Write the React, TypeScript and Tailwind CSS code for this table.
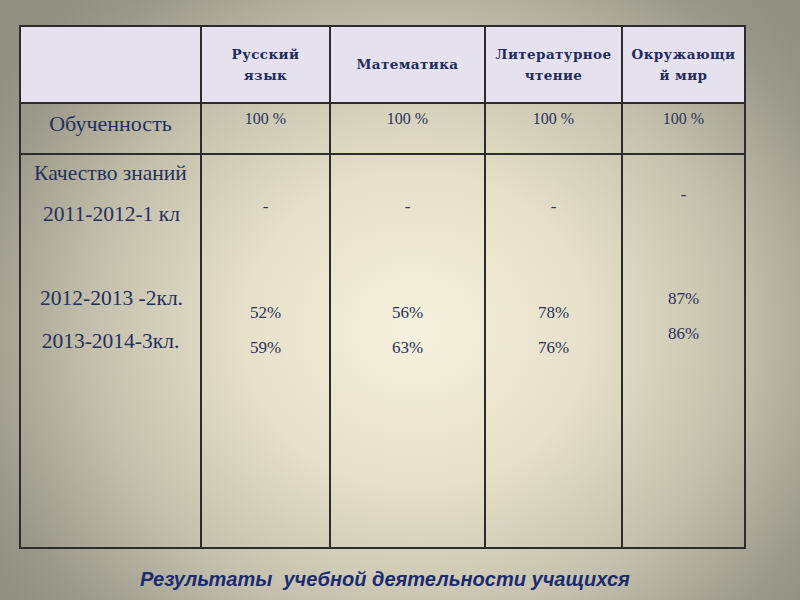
const serif = "font-['Liberation_Serif',serif]";

const subjects = [
  ["Русский", "язык"],
  ["Математика"],
  ["Литературное", "чтение"],
  ["Окружающи", "й мир"],
];

const results = [
  { dash: "pt-[42px]", vals: ["52%", "59%"], gap: "mt-[86px]" },
  { dash: "pt-[42px]", vals: ["56%", "63%"], gap: "mt-[86px]" },
  { dash: "pt-[42px]", vals: ["78%", "76%"], gap: "mt-[86px]" },
  { dash: "pt-[30px]", vals: ["87%", "86%"], gap: "mt-[84px]" },
];

const App = () => {
  return (
    <div className="w-[800px] h-[600px] overflow-hidden bg-[radial-gradient(ellipse_62%_75%_at_52%_55%,#f6f1de_0%,#e6e0ca_35%,#c4c0ad_65%,#9b998a_90%,#929081_100%)]">
      <div className="pt-[25px] pl-[19px]">
        <div className="grid grid-cols-[181px_129px_155px_137px_121px] grid-rows-[77px_51px_392px] w-max border-2 border-[#2c2c2c]">
          <div className="bg-[#e5e1ee] border-r-2 border-b-2 border-[#2c2c2c]" />
          {subjects.map((s, i) => (
            <div
              key={i}
              className={
                "bg-[#e5e1ee] border-b-2 border-[#2c2c2c] flex flex-col items-center justify-center font-['DejaVu_Serif',serif] font-bold text-[13.5px] leading-[21px] text-[#1f2b5c] tracking-[0.4px] " +
                (i < 3 ? "border-r-2" : "")
              }
            >
              {s.map((l) => (
                <div key={l}>{l}</div>
              ))}
            </div>
          ))}

          <div className={`border-r-2 border-b-2 border-[#2c2c2c] text-center pt-[7px] text-[22px] leading-[26px] text-[#25305d] ${serif}`}>
            Обученность
          </div>
          {[0, 1, 2, 3].map((i) => (
            <div
              key={i}
              className={
                `border-b-2 border-[#2c2c2c] text-center pt-[5px] text-[16px] leading-5 text-[#2b3358] ${serif} ` +
                (i < 3 ? "border-r-2" : "")
              }
            >
              100 %
            </div>
          ))}

          <div className={`border-r-2 border-[#2c2c2c] text-center pt-[5px] text-[21.5px] leading-[26px] text-[#25305d] ${serif}`}>
            <div>Качество знаний</div>
            <div className="mt-[15px] pl-[2px]">2011-2012-1 кл</div>
            <div className="mt-[58px] pl-[2px]">2012-2013 -2кл.</div>
            <div className="mt-[17px]">2013-2014-3кл.</div>
          </div>
          {results.map((r, i) => (
            <div
              key={i}
              className={
                `border-[#2c2c2c] text-center text-[17px] leading-5 text-[#2b3358] ${r.dash} ${serif} ` +
                (i < 3 ? "border-r-2" : "")
              }
            >
              <div>-</div>
              <div className={r.gap}>{r.vals[0]}</div>
              <div className="mt-[15px]">{r.vals[1]}</div>
            </div>
          ))}
        </div>
      </div>
      <div className="pt-[18px] pl-[140px] font-['Liberation_Sans',sans-serif] font-bold italic text-[20px] leading-6 text-[#1c2b6e] whitespace-pre">
        {"Результаты  учебной деятельности учащихся"}
      </div>
    </div>
  );
};

export default App;
